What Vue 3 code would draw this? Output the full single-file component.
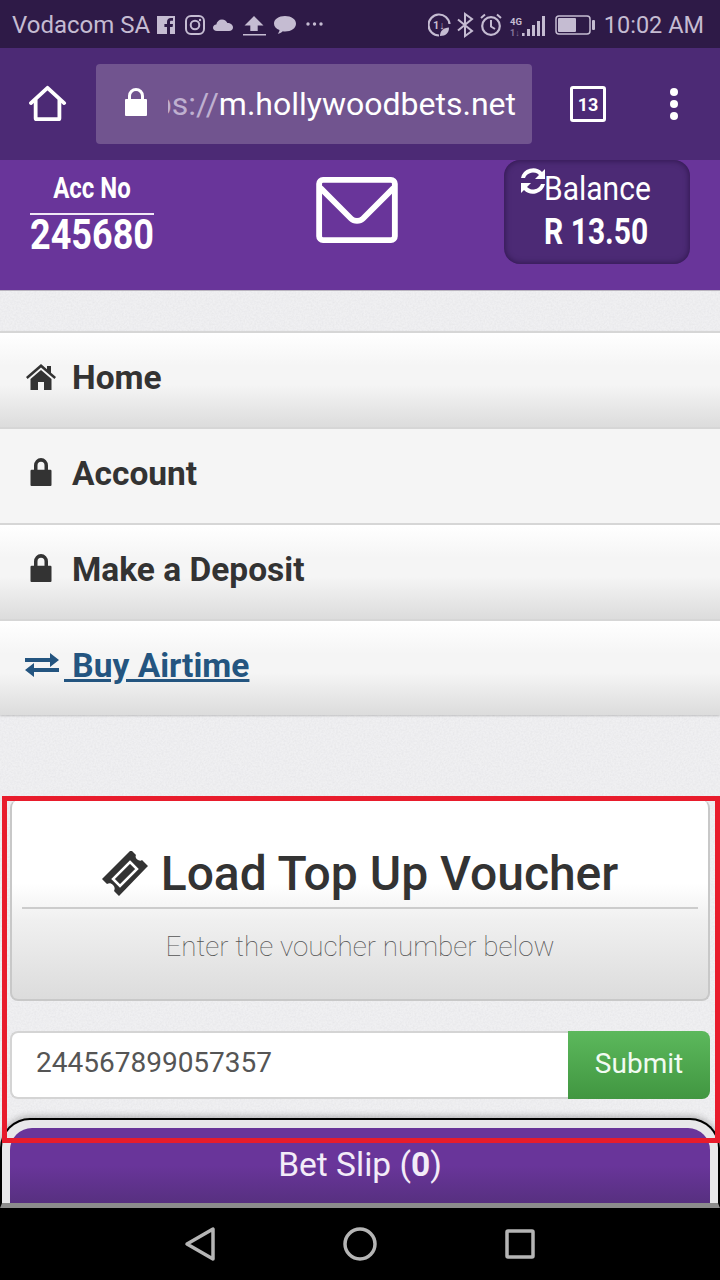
<script setup>
const menu = [
  { label: 'Home', icon: 'home' },
  { label: 'Account', icon: 'lock' },
  { label: 'Make a Deposit', icon: 'lock' },
  { label: ' Buy Airtime', icon: 'swap', link: true },
]
</script>

<template>
  <div class="phone">
    <div class="status">
      <span class="carrier">Vodacom SA</span>
      <svg class="st-icons" width="170" height="34" viewBox="0 0 170 34" fill="#c5bcd2">
        <path d="M1 8h18v18H14v-7h2.600l.4-3h-3v-1.800c0-.9.3-1.400 1.400-1.400H17V10.100c-.6-.1-1.300-.1-2.100-.1-2.300 0-3.900 1.300-3.900 3.900V16H8.400v3H11v7H1z" />
        <rect x="30" y="8" width="18" height="18" rx="5" fill="none" stroke="#c5bcd2" stroke-width="2" />
        <circle cx="39" cy="17" r="4.300" fill="none" stroke="#c5bcd2" stroke-width="2" />
        <circle cx="44" cy="12" r="1.200" />
        <path d="M61 23c-2.500 0-4-1.500-4-3.300 0-1.800 1.400-3.200 3.300-3.300.5-3 2.800-5 5.700-5 2.500 0 4.600 1.500 5.400 3.600 3.200 0 5.600 1.900 5.600 4.500 0 2.200-1.700 3.500-3.900 3.500z" />
        <path d="M98 8l9.500 9.500h-5.800V23h-7.400v-5.500h-5.800zM87 26h23v1.600H87z" />
        <path d="M129 8c6.300 0 11 3.200 11 7.700s-4.700 7.700-11 7.700c-.8 0-1.500 0-2.200-.2-1.500 1.500-3.300 2.300-5 2.500 1-1.100 1.600-2.300 1.700-3.700-3.300-1.300-5.500-3.600-5.500-6.300C118 11.200 122.700 8 129 8z" />
        <circle cx="152" cy="16" r="1.700" /><circle cx="158.500" cy="16" r="1.700" /><circle cx="165" cy="16" r="1.700" />
      </svg>
      <div class="st-right">
        <svg width="124" height="34" viewBox="0 0 124 34" fill="none" stroke="#c5bcd2">
          <path d="M11 27.500A10.500 10.500 0 1 1 21.500 16" stroke-width="2.200" />
          <text x="5" y="21" font-size="11" font-weight="700" fill="#c5bcd2" stroke="none" font-family="Roboto, sans-serif">1↓</text>
          <path d="M12 28c0-5 3.500-8.500 9-8.500 0 5.500-3 8.500-9 8.500z" fill="#c5bcd2" stroke="none" />
          <path d="M30 11.500l14 11.500-7 5V6l7 5-14 11.500" stroke-width="2" />
          <circle cx="63" cy="18" r="8.800" stroke-width="2.200" />
          <path d="M63 12v6.500l4 2.500M53 10l4-3.500M73 10l-4-3.500" stroke-width="2" />
          <text x="82" y="17" font-size="9.500" font-weight="700" fill="#c5bcd2" stroke="none" font-family="Roboto, sans-serif">4G</text>
          <text x="82" y="28" font-size="9" font-weight="700" fill="#85749c" stroke="none" font-family="Roboto, sans-serif">1↓</text>
          <g fill="#c5bcd2" stroke="none">
            <rect x="94" y="25" width="2.600" height="3" />
            <rect x="99" y="21" width="3" height="7" />
            <rect x="104" y="17" width="3" height="11" />
            <rect x="109" y="13" width="3" height="15" />
            <rect x="114" y="8" width="3" height="20" />
          </g>
        </svg>
        <svg class="battery" width="42" height="22" viewBox="0 0 42 22">
          <rect x="1" y="2" width="34" height="18" rx="3" fill="none" stroke="#c5bcd2" stroke-width="1.500" />
          <rect x="3" y="4" width="18" height="14" rx="1" fill="#c5bcd2" />
          <rect x="37" y="6" width="3" height="10" rx="1" fill="#c5bcd2" />
        </svg>
        <span class="time">10:02 AM</span>
      </div>
    </div>

    <div class="toolbar">
      <svg class="tb-home" width="38" height="38" viewBox="0 0 40 38" fill="none" stroke="#fff" stroke-width="4" stroke-linejoin="round" stroke-linecap="round">
        <path d="M2 18L19.500 2 37 18" />
        <path d="M7 15v19a1 1 0 0 0 1 1h23a1 1 0 0 0 1-1V15" />
      </svg>
      <div class="urlbar">
        <svg class="url-lock" width="24" height="30" viewBox="0 0 24 30" fill="#fff">
          <path d="M2 12h2V9a8 8 0 0 1 16 0v3h2a1 1 0 0 1 1 1v15a1 1 0 0 1-1 1H2a1 1 0 0 1-1-1V13a1 1 0 0 1 1-1zm5 0h10V9a5 5 0 0 0-10 0z" />
        </svg>
        <div class="url"><span class="scheme">ps://</span><span>m.hollywoodbets.net</span></div>
      </div>
      <div class="tabs">13</div>
      <div class="dots"><i></i><i></i><i></i></div>
    </div>

    <div class="head">
      <div class="acc">
        <div class="acc-label"><span>Acc No</span></div>
        <div class="acc-no"><span>245680</span></div>
      </div>
      <svg class="mail" width="84" height="66" viewBox="0 0 84 68" fill="none" stroke="#fff" stroke-width="6" stroke-linejoin="round" stroke-linecap="round">
        <rect x="3" y="3" width="78" height="62" rx="4" />
        <path d="M5 14l31 31c3 3 9 3 12 0l31-31" transform="translate(0 -2)" />
      </svg>
      <div class="balance">
        <div class="bal-top">
          <svg width="30" height="30" viewBox="0 0 30 30" fill="#fff">
            <path d="M27 3v10H17l4-4a8.500 8.500 0 0 0-14 3H3A12.500 12.500 0 0 1 24 6z" />
            <path d="M3 27V17h10l-4 4a8.500 8.500 0 0 0 14-3h4A12.500 12.500 0 0 1 6 24z" />
          </svg>
          <span>Balance</span>
        </div>
        <div class="bal-amt">R 13.50</div>
      </div>
    </div>

    <div class="content">
      <ul class="menu">
        <li v-for="item in menu" :key="item.label" :class="{ link: item.link }">
          <svg v-if="item.icon === 'home'" class="m-ico" width="30" height="26" viewBox="0 0 30 26" fill="#333">
            <path d="M15 0l6 5.200V2h4v6.700L30 13l-1.600 1.900L15 3.400 1.600 14.900 0 13z" />
            <path d="M15 6l10.500 9v11H18v-8h-6v8H4.500V15z" />
          </svg>
          <svg v-else-if="item.icon === 'lock'" class="m-ico lock" width="30" height="28" viewBox="0 0 30 26" preserveAspectRatio="none" fill="#333">
            <path d="M5.500 11H8V7a7 7 0 0 1 14 0v4h2.500a1 1 0 0 1 1 1v13a1 1 0 0 1-1 1h-19a1 1 0 0 1-1-1V12a1 1 0 0 1 1-1zM11.500 11h7V7a3.500 3.500 0 0 0-7 0z" />
          </svg>
          <svg v-else class="m-ico swap" width="34" height="26" viewBox="0 0 34 26" fill="#245580">
            <path d="M0 6h25V1l9 7-9 7v-5H0zM34 16H9v-5l-9 7 9 7v-5h25z" />
          </svg>
          <span class="m-label">{{ item.label }}</span>
        </li>
      </ul>

      <div class="voucher">
        <div class="v-card">
          <h1 class="v-title">
            <svg width="46" height="46" viewBox="0 0 46 46" fill="#333">
              <path d="M29 0l5 5c-1 2 0 4 2 5s3 1 4 0l6 6-2 2L17 46l-5-5c1-2 1-4-1-6s-4-2-6-1l-5-5z" transform="translate(0 -1)" />
              <path d="M28 11l7 7-17 17-7-7z" fill="none" stroke="#fff" stroke-width="2.500" />
            </svg>
            <span>Load Top Up Voucher</span>
          </h1>
          <div class="v-sub">Enter the voucher number below</div>
        </div>
        <form class="v-form" @submit.prevent>
          <div class="v-input">244567899057357</div>
          <button class="v-btn" type="submit">Submit</button>
        </form>
      </div>

      <div class="slip">
        <div class="slip-bar">Bet Slip (<b>0</b>)</div>
      </div>
      <div class="mark"></div>
    </div>

    <div class="navbar">
      <svg width="32" height="36" viewBox="0 0 32 36" fill="none" stroke="#b5b5b5" stroke-width="3.500" stroke-linejoin="round">
        <path d="M29 3v30L3 18z" />
      </svg>
      <svg width="36" height="36" viewBox="0 0 36 36" fill="none" stroke="#b5b5b5" stroke-width="3.500">
        <circle cx="18" cy="18" r="15" />
      </svg>
      <svg width="32" height="32" viewBox="0 0 32 32" fill="none" stroke="#b5b5b5" stroke-width="3.500" stroke-linejoin="round">
        <rect x="3" y="3" width="26" height="26" rx="1" />
      </svg>
    </div>
  </div>
</template>

<style scoped>
.phone {
  width: 720px;
  height: 1280px;
  display: flex;
  flex-direction: column;
  overflow: hidden;
  font-family: Roboto, "Liberation Sans", sans-serif;
  background: #eeeef0;
}

.status {
  height: 48px;
  flex: none;
  background: #2e1a47;
  color: #c5bcd2;
  display: flex;
  align-items: center;
  padding: 2px 16px 0 12px;
  box-sizing: border-box;
}
.carrier {
  font-size: 24px;
  white-space: nowrap;
}
.st-icons {
  margin-left: 6px;
}
.st-right {
  margin-left: auto;
  display: flex;
  align-items: center;
}
.battery {
  margin-left: 3px;
}
.time {
  font-size: 23.500px;
  margin-left: 7px;
  white-space: nowrap;
}

.toolbar {
  height: 112px;
  flex: none;
  background: #4c2a75;
  display: flex;
  align-items: center;
}
.tb-home {
  margin-left: 29px;
  flex: none;
}
.urlbar {
  margin-left: 29px;
  width: 436px;
  height: 80px;
  background: #71548f;
  border-radius: 4px;
  display: flex;
  align-items: center;
  padding-left: 28px;
  box-sizing: border-box;
  flex: none;
}
.url-lock {
  margin-top: -4px;
}
.url {
  margin-left: 20px;
  width: 348px;
  overflow: hidden;
  direction: rtl;
  font-size: 32px;
  color: #fff;
  white-space: nowrap;
}
.url span {
  unicode-bidi: embed;
  direction: ltr;
}
.scheme {
  color: #bfb0d0;
}
.tabs {
  margin-left: 38px;
  width: 36px;
  height: 36px;
  border: 3.500px solid #fff;
  border-radius: 3px;
  box-sizing: border-box;
  color: #fff;
  font-size: 18px;
  font-weight: 700;
  display: flex;
  align-items: center;
  justify-content: center;
  flex: none;
}
.dots {
  margin-left: 64px;
  display: flex;
  flex-direction: column;
  gap: 4px;
}
.dots i {
  width: 8px;
  height: 8px;
  border-radius: 50%;
  background: #fff;
}

.head {
  height: 131px;
  flex: none;
  background: #69359a;
  display: flex;
  align-items: flex-start;
  color: #fff;
  border-bottom: 1px solid #b9b4bf;
  box-sizing: border-box;
}
.acc {
  width: 124px;
  margin-left: 30px;
  margin-top: 14px;
  text-align: center;
}
.acc-label {
  font-size: 24px;
  font-weight: 700;
  line-height: 28px;
  padding-bottom: 11px;
  border-bottom: 2px solid #f0e8f6;
}
.acc-label span,
.acc-no span {
  display: inline-block;
  transform: scaleY(1.2);
}
.acc-no {
  font-size: 36px;
  font-weight: 700;
  line-height: 40px;
}
.mail {
  margin-left: 161px;
  margin-top: 17px;
  flex: none;
}
.balance {
  margin-left: 105px;
  width: 186px;
  height: 104px;
  background: #4c2a75;
  border-radius: 16px;
  box-shadow: inset 0 0 6px rgba(20, 5, 40, 0.6);
  box-sizing: border-box;
  padding: 8px 0 0 14px;
}
.bal-top {
  display: flex;
  font-size: 30px;
  line-height: 42px;
}
.bal-top svg {
  margin-top: -2px;
  margin-right: -4px;
  flex: none;
}
.bal-top span {
  display: inline-block;
  transform: scaleY(1.13);
}
.bal-amt {
  font-size: 30px;
  font-weight: 700;
  line-height: 36px;
  margin: 4px 0 0 26px;
  transform: scaleY(1.2);
  transform-origin: left center;
}

.content {
  flex: 1;
  position: relative;
  padding-top: 40px;
  background-color: #f0f0f2;
  background-image: url("data:image/svg+xml,%3Csvg xmlns='http://www.w3.org/2000/svg' width='240' height='240'%3E%3Cfilter id='n'%3E%3CfeTurbulence type='fractalNoise' baseFrequency='.55' numOctaves='2' stitchTiles='stitch'/%3E%3CfeColorMatrix values='0 0 0 0 .6 0 0 0 0 .6 0 0 0 0 .63 .4 0 0 0 -.12'/%3E%3C/filter%3E%3Crect width='240' height='240' filter='url(%23n)'/%3E%3C/svg%3E");
  overflow: hidden;
}

.menu {
  list-style: none;
  margin: 0;
  padding: 0;
  box-shadow: 0 1px 2px rgba(0, 0, 0, 0.2);
}
.menu li {
  height: 96px;
  box-sizing: border-box;
  display: flex;
  align-items: center;
  padding: 0 0 6px 26px;
  border-top: 2px solid #d6d6d6;
  color: #333;
  background: linear-gradient(#fff, #f5f5f5 35%, #f5f5f5 55%, #dcdcdc);
}
.menu li:nth-child(2) {
  background: #f5f5f5;
}
.m-ico {
  flex: none;
}
.lock {
  margin-top: -2px;
}
.m-label {
  margin-left: 16px;
  font-size: 33.500px;
  font-weight: 700;
  white-space: pre;
}
.menu .link {
  padding-left: 25px;
  color: #245580;
}
.link .m-label {
  margin-left: 5px;
  text-decoration: underline;
}

.voucher {
  margin-top: 85px;
  padding: 0 10px;
}
.v-card {
  height: 201px;
  box-sizing: border-box;
  padding: 0 10px;
  border: 2px solid #c8c8c8;
  border-top: 0;
  border-radius: 8px;
  background: linear-gradient(#fff, #fff 42%, #f0f0f0 60%, #dcdcdc);
  text-align: center;
}
.v-title {
  margin: 0;
  height: 109px;
  box-sizing: border-box;
  padding-top: 41px;
  border-bottom: 2px solid #ccc;
  color: #333;
  font-size: 48px;
  font-weight: 500;
  line-height: 56px;
  display: flex;
  align-items: center;
  justify-content: center;
  gap: 13px;
  white-space: nowrap;
}
.v-sub {
  margin-top: 22px;
  color: #555;
  font-size: 27.800px;
  font-weight: 100;
  line-height: 32px;
}
.v-form {
  margin: 30px 0 0;
  display: flex;
  height: 68px;
}
.v-input {
  flex: 1;
  background: #fff;
  border: 2px solid #d4d4d4;
  border-right: 0;
  border-radius: 8px 0 0 8px;
  color: #555;
  font-size: 28px;
  padding-left: 24px;
  line-height: 60px;
  box-sizing: border-box;
}
.v-btn {
  width: 142px;
  border: 0;
  border-radius: 0 8px 8px 0;
  background: linear-gradient(#5cb85c, #419641);
  color: #f2fbf2;
  font-family: inherit;
  font-size: 28px;
  padding: 0 0 4px;
}

.slip {
  position: absolute;
  left: 0;
  right: 0;
  top: 827px;
  height: 90px;
  box-sizing: border-box;
  border: 2px solid #000;
  border-bottom: 5px solid #8c8c8c;
  border-radius: 30px 30px 0 0;
  background: #e8e8ea;
  padding: 8px 8px 0;
  box-shadow: 0 -2px 6px rgba(0, 0, 0, 0.25);
}
.slip-bar {
  height: 75px;
  border-radius: 22px 22px 0 0;
  background: linear-gradient(#69359a, #69359a 50%, #573080);
  color: #f3ecf8;
  font-size: 33.500px;
  text-align: center;
  line-height: 74px;
}
.mark {
  position: absolute;
  left: 2px;
  right: 0;
  top: 505px;
  height: 347px;
  box-sizing: border-box;
  border: 5px solid #e81c2c;
  pointer-events: none;
}

.navbar {
  height: 72px;
  flex: none;
  background: #000;
  display: flex;
  align-items: center;
  justify-content: space-between;
  padding: 0 184px;
}
</style>
